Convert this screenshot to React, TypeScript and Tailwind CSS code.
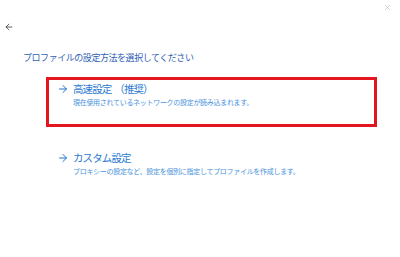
import { ArrowLeft, ArrowRight, X } from "lucide-react";

type Option = {
	title: string;
	desc: string;
	selected?: boolean;
};

const options: Option[] = [
	{
		title: "高速設定\u00a0\u00a0（推奨）",
		desc: "現在使用されているネットワークの設定が読み込まれます。",
		selected: true,
	},
	{
		title: "カスタム設定",
		desc: "プロキシーの設定など、設定を個別に指定してプロファイルを作成します。",
	},
];

function OptionItem({ option }: { option: Option }) {
	return (
		<div
			className={
				option.selected
					? "ml-[46px] h-[50px] w-[331px] border-[3px] border-[#e3161f] pl-[8px] pt-[3px]"
					: "ml-[46px] h-[50px] w-[331px] border-[3px] border-transparent pl-[8px] pt-[3px]"
			}
		>
			<div className="flex h-[12px] items-center gap-[4px]">
				<ArrowRight className="h-[12px] w-[12px] text-[#1f74cc]" strokeWidth={2} />
				<span className="text-[10.5px] leading-[12px] tracking-[-0.9px] text-[#2b7ad1]">
					{option.title}
				</span>
			</div>
			<p className="mt-[2px] pl-[16px] text-[7px] leading-[10px] tracking-[-0.3px] text-[#4a92dc]">
				{option.desc}
			</p>
		</div>
	);
}

export default function App() {
	return (
		<div className="h-[257px] w-[400px] overflow-hidden bg-white font-['Noto_Sans_CJK_JP',sans-serif]">
			{/* close */}
			<div className="flex h-[14px] items-center justify-end pr-[8px]">
				<X className="h-[9px] w-[9px] text-[#a8a8a8]" strokeWidth={1.3} />
			</div>

			{/* back */}
			<div className="flex h-[26px] items-center pl-[4px]">
				<ArrowLeft className="h-[10px] w-[10px] text-[#444]" strokeWidth={2} />
			</div>

			<h1 className="mt-[12px] pl-[23px] text-[9px] leading-[12px] tracking-[-0.45px] text-[#2f5fb5]">
				プロファイルの設定方法を選択してください
			</h1>

			{/* options */}
			<div className="mt-[13px] flex flex-col gap-[19px]">
				{options.map((option) => (
					<OptionItem key={option.title} option={option} />
				))}
			</div>
		</div>
	);
}
